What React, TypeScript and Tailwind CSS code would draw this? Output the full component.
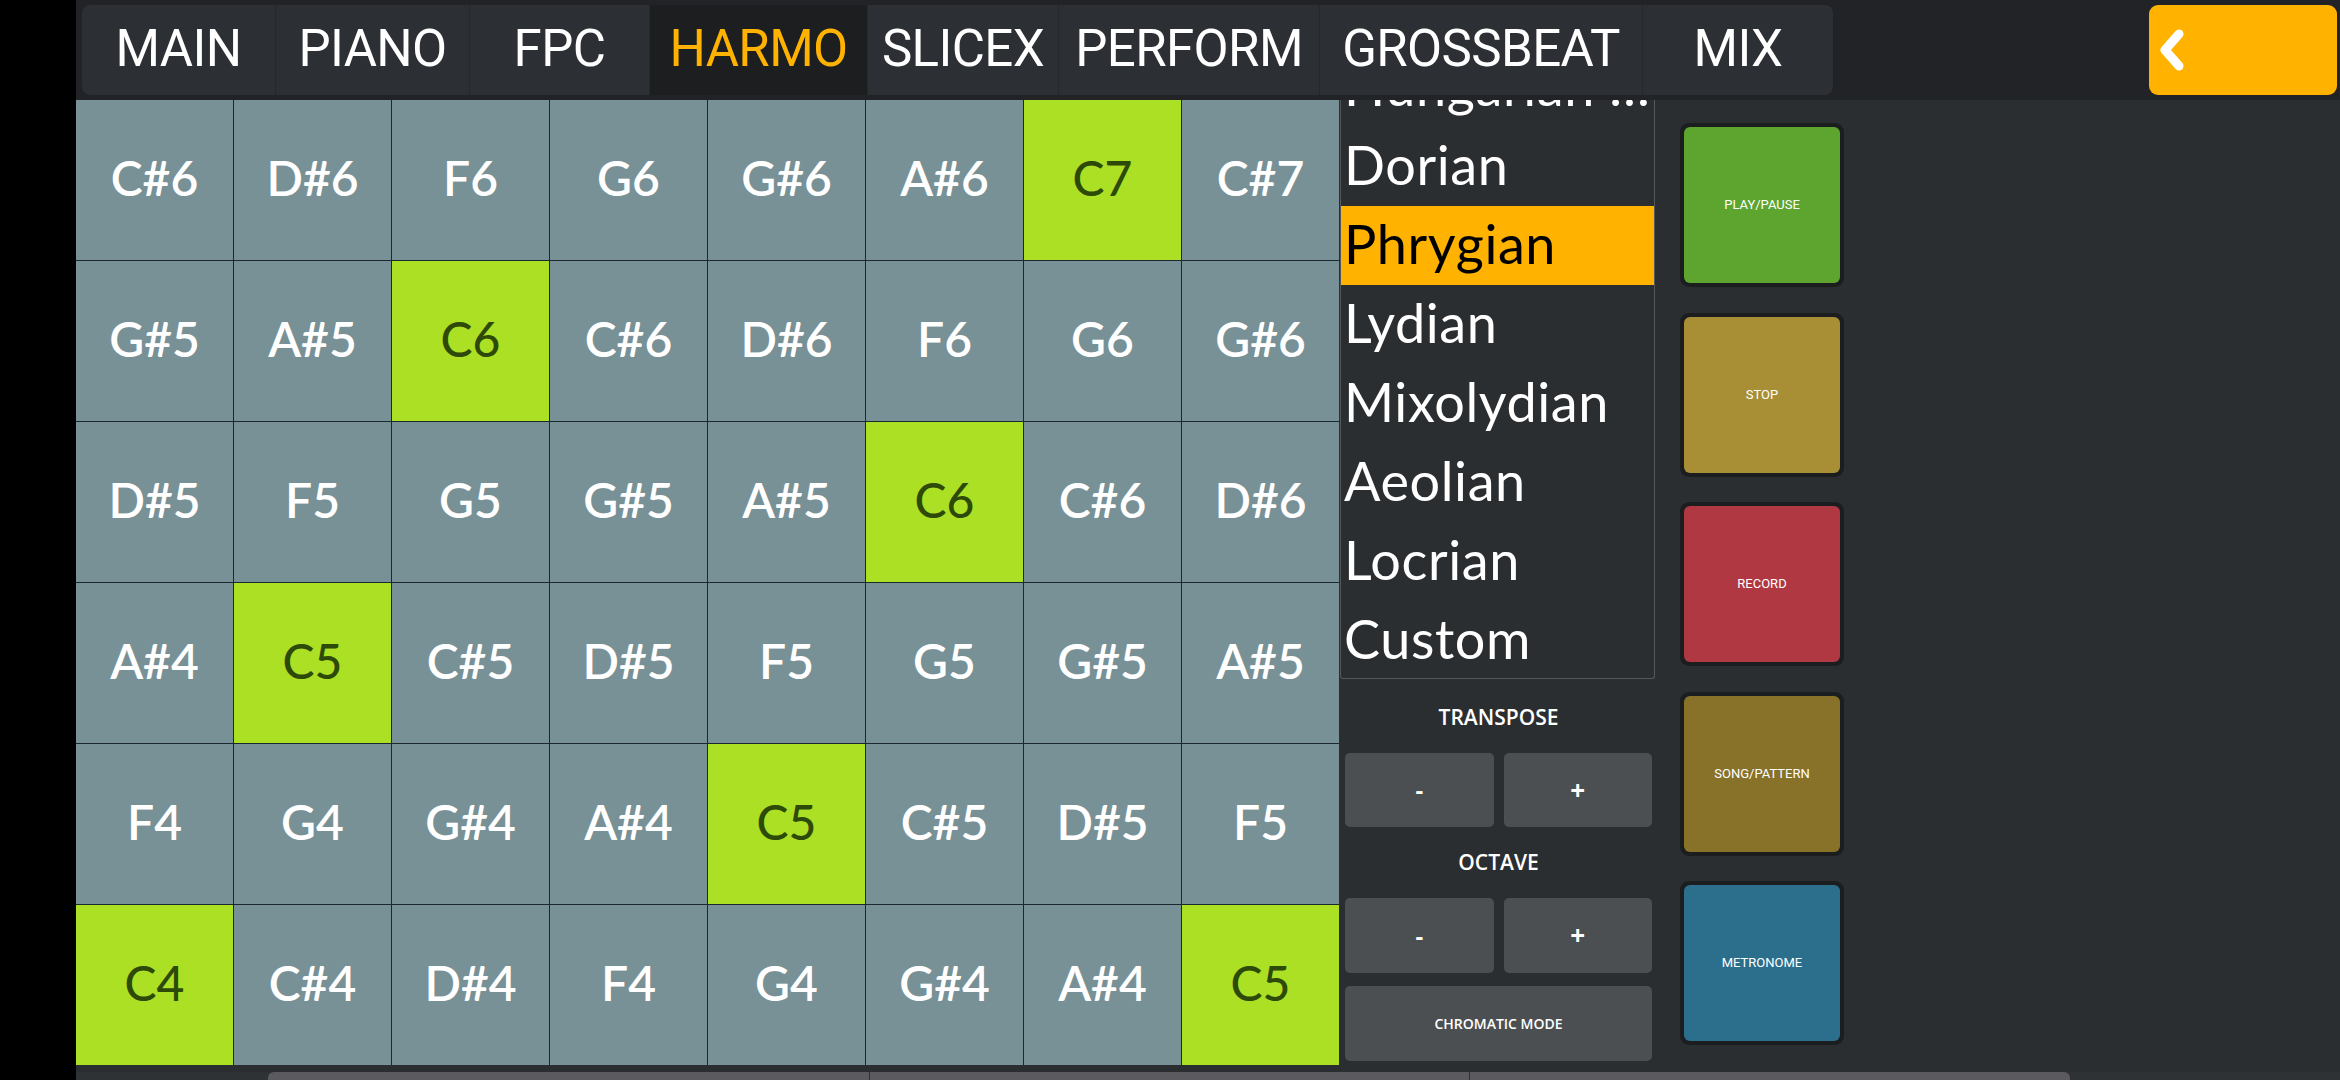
import React from "react";

const tabs: { label: string; w: string; active?: boolean }[] = [
  { label: "MAIN", w: "w-[193px]" },
  { label: "PIANO", w: "w-[194px]" },
  { label: "FPC", w: "w-[180px]" },
  { label: "HARMO", w: "w-[218px]", active: true },
  { label: "SLICEX", w: "w-[191px]" },
  { label: "PERFORM", w: "w-[261px]" },
  { label: "GROSSBEAT", w: "w-[323px]" },
  { label: "MIX", w: "w-[191px]" },
];

const rows: string[][] = [
  ["C#6", "D#6", "F6", "G6", "G#6", "A#6", "C7", "C#7"],
  ["G#5", "A#5", "C6", "C#6", "D#6", "F6", "G6", "G#6"],
  ["D#5", "F5", "G5", "G#5", "A#5", "C6", "C#6", "D#6"],
  ["A#4", "C5", "C#5", "D#5", "F5", "G5", "G#5", "A#5"],
  ["F4", "G4", "G#4", "A#4", "C5", "C#5", "D#5", "F5"],
  ["C4", "C#4", "D#4", "F4", "G4", "G#4", "A#4", "C5"],
];

const scales = ["Hungarian Minor", "Dorian", "Phrygian", "Lydian", "Mixolydian", "Aeolian", "Locrian", "Custom"];

const pads: { label: string; bg: string }[] = [
  { label: "PLAY/PAUSE", bg: "bg-[#5da52f]" },
  { label: "STOP", bg: "bg-[#a88f35]" },
  { label: "RECORD", bg: "bg-[#b03842]" },
  { label: "SONG/PATTERN", bg: "bg-[#88722a]" },
  { label: "METRONOME", bg: "bg-[#2b6f8d]" },
];

export default function App() {
  return (
    <div className="w-[2340px] h-[1080px] flex bg-black overflow-hidden">
      <div className="w-[76px] h-full shrink-0 bg-black" />
      <div className="flex-1 flex flex-col bg-[#2b2e31] min-w-0">
        {/* top bar */}
        <div className="h-[100px] shrink-0 bg-[#212326] flex items-start pt-[5px] pl-[6px] pr-[3px]">
          <div className="flex h-[90px] rounded-lg bg-[#2c2f33] overflow-hidden">
            {tabs.map((t, i) => (
              <div
                key={t.label}
                className={`${t.w} h-full flex items-center justify-center pb-[4px] text-[51px] tracking-[-0.6px] leading-none whitespace-nowrap font-['Roboto',sans-serif] ${
                  t.active ? "bg-[#1d1e20] text-[#ffb300]" : "text-white"
                } ${i > 0 ? "border-l border-[#26292c]" : ""}`}
              >
                {t.label}
              </div>
            ))}
          </div>
          <div className="ml-auto w-[188px] h-[90px] rounded-[9px] bg-[#ffb300] flex items-center pl-[8px]">
            <svg width="34" height="48" viewBox="0 0 34 48">
              <polyline
                points="22,8 8,24 22,40"
                fill="none"
                stroke="white"
                strokeWidth="9"
                strokeLinecap="round"
                strokeLinejoin="round"
              />
            </svg>
          </div>
        </div>

        {/* content */}
        <div className="flex h-[972px] shrink-0">
          <div className="w-[1263px] flex flex-col shrink-0">
            <div className="w-[1263px] h-[965px] grid grid-cols-8 grid-rows-6 gap-px bg-[#1b2830]">
              {rows.flat().map((n, i) => {
                const c = n.startsWith("C") && !n.includes("#");
                return (
                  <div
                    key={i}
                    className={`flex items-center justify-center pb-[4px] text-[48px] font-['Lato',sans-serif] ${
                      c ? "bg-[#ace024] text-[#2e4a08] font-medium" : "bg-[#789196] text-white font-semibold"
                    }`}
                  >
                    {n}
                  </div>
                );
              })}
            </div>
            <div className="flex-1 bg-[#2a2e31]" />
          </div>

          {/* side column */}
          <div className="w-[316px] shrink-0 flex flex-col pl-px">
            <div className="h-[579px] w-[315px] border border-t-0 border-[#55595c] rounded-b-[3px] overflow-hidden">
              <div className="-mt-[52px]">
                {scales.map((s) => (
                  <div
                    key={s}
                    className={`h-[79px] flex items-center pl-[3px] pr-[4px] pb-[5px] text-[54px] font-['Lato',sans-serif] tracking-[0.6px] whitespace-nowrap overflow-hidden ${
                      s === "Phrygian" ? "bg-[#ffb300] text-black" : "text-white"
                    }`}
                  >
                    <span className="truncate">{s}</span>
                  </div>
                ))}
              </div>
            </div>
            <div className="pl-[5px] pr-[3px] flex flex-col font-['Open_Sans',sans-serif]">
              <div className="h-[74px] pt-[3px] flex items-center justify-center text-white text-[21px] font-semibold">TRANSPOSE</div>
              <div className="flex gap-[10px] h-[74px]">
                <div className="flex-1 rounded-[5px] bg-[#4b4f52] flex items-center justify-center text-white text-[24px] font-bold">-</div>
                <div className="flex-1 rounded-[5px] bg-[#4b4f52] flex items-center justify-center text-white text-[26px] font-bold">+</div>
              </div>
              <div className="h-[71px] flex items-center justify-center text-white text-[21px] font-semibold">OCTAVE</div>
              <div className="flex gap-[10px] h-[75px]">
                <div className="flex-1 rounded-[5px] bg-[#4b4f52] flex items-center justify-center text-white text-[24px] font-bold">-</div>
                <div className="flex-1 rounded-[5px] bg-[#4b4f52] flex items-center justify-center text-white text-[26px] font-bold">+</div>
              </div>
              <div className="mt-[13px] h-[75px] rounded-[5px] bg-[#4b4f52] flex items-center justify-center text-white text-[14px] font-semibold">
                CHROMATIC MODE
              </div>
            </div>
          </div>

          {/* pads */}
          <div className="ml-[25px] pt-[23px] flex flex-col gap-[25.5px]">
            {pads.map((p) => (
              <div key={p.label} className="w-[164px] h-[164px] rounded-[9px] bg-[#1b1d1f] p-[4px]">
                <div
                  className={`w-full h-full rounded-[6px] ${p.bg} flex items-center justify-center text-[13px] text-white font-['Roboto',sans-serif]`}
                >
                  {p.label}
                </div>
              </div>
            ))}
          </div>
        </div>

        {/* bottom scroll strip */}
        <div className="h-[8px] shrink-0 bg-[#2f3235] flex pl-[192px]">
          <div className="w-[601px] h-full bg-[#5b5b5f] rounded-tl-[6px]" />
          <div className="w-px h-full bg-[#2f3235]" />
          <div className="w-[599px] h-full bg-[#5b5b5f]" />
          <div className="w-px h-full bg-[#2f3235]" />
          <div className="w-[600px] h-full bg-[#5b5b5f] rounded-tr-[6px]" />
        </div>
      </div>
    </div>
  );
}
